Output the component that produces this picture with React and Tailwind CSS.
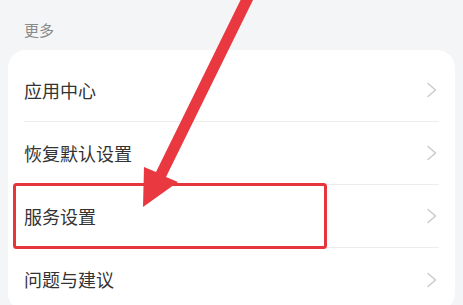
import React from 'react';

const items = ['应用中心', '恢复默认设置', '服务设置', '问题与建议'];

const Chevron = () => (
  <svg width="12" height="16" viewBox="0 0 12 16" fill="none" className="mr-[1px]">
    <path d="M2 1.5 L9.5 8 L2 14.5" stroke="#c9c9c9" strokeWidth="1.4" strokeLinecap="round" strokeLinejoin="round" />
  </svg>
);

// annotation drawn on top of the screenshot: arrow + highlight box
const Annotation = () => (
  <svg className="absolute inset-0 pointer-events-none" width="463" height="305" viewBox="0 0 463 305">
    <rect x="14.5" y="184.5" width="311" height="63" rx="2" fill="none" stroke="#e5353d" strokeWidth="3" />
    <polygon
      points="244,-7 254,-2 166,177 178,182 143,207 144,167 156,172"
      fill="#e9383f"
    />
  </svg>
);

export default function App() {
  return (
    <div
      className="relative w-[463px] h-[305px] overflow-hidden bg-[#f4f5f7] px-2"
      style={{ fontFamily: '"Noto Sans CJK SC", "Noto Sans", sans-serif' }}
    >
      <div className="h-[50px] pt-[20px] pl-4 text-[15px] leading-5 text-[#8a8a8a]">更多</div>

      <div className="bg-white rounded-[18px] pt-[9px] px-4">
        {items.map((label, i) => (
          <div
            key={label}
            className={`h-[63px] flex items-center justify-between ${i < items.length - 1 ? 'border-b border-[#ededed]' : ''}`}
          >
            <span className="text-[18px] text-[#333333]">{label}</span>
            <Chevron />
          </div>
        ))}
      </div>

      <Annotation />
    </div>
  );
}
